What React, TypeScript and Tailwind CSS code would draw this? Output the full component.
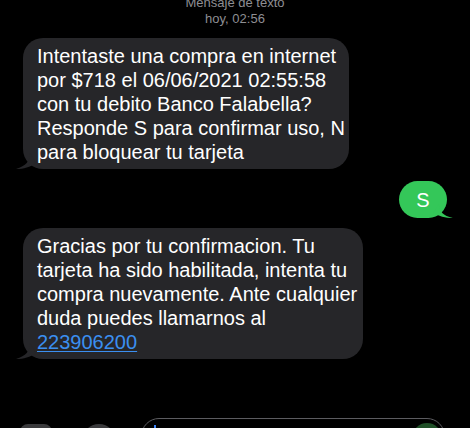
export default function App() {
  return (
    <div
      className="w-[470px] h-[428px] overflow-hidden bg-black flex flex-col"
      style={{ fontFamily: '"Liberation Sans", Arial, sans-serif' }}
    >
      <div className="-mt-[5px] flex flex-col items-center text-[13px] leading-[16px] text-[#8e8e93]">
        <span>Mensaje de texto</span>
        <span>hoy, 02:56</span>
      </div>

      {/* incoming 1 */}
      <div className="mt-[11px] pl-[23px]">
        <div className="relative w-[326px] rounded-[20px] bg-[#262629] pl-[14px] pt-[6px] pb-[5px] text-[20px] leading-[24px] text-white whitespace-nowrap">
          Intentaste una compra en internet
          <br />
          por $718 el 06/06/2021 02:55:58
          <br />
          con tu debito Banco Falabella?
          <br />
          Responde S para confirmar uso, N
          <br />
          para bloquear tu tarjeta
          <svg className="absolute -left-[7px] bottom-0" width="22" height="16" viewBox="0 0 22 16">
            <path d="M14 0 C14 8 10 13 0 16 C8 16 14 14 20 10 Z" fill="#262629" />
          </svg>
        </div>
      </div>

      {/* outgoing */}
      <div className="mt-[12px] flex justify-end pr-[23px]">
        <div className="relative flex h-[37px] w-[48px] items-center justify-center rounded-[19px] bg-[#34c759] text-[20px] text-white">
          S
          <svg className="absolute -right-[6px] bottom-0" width="20" height="14" viewBox="0 0 20 14">
            <path d="M6 0 C6 7 10 12 20 14 C12 14 6 12 0 9 Z" fill="#34c759" />
          </svg>
        </div>
      </div>

      {/* incoming 2 */}
      <div className="mt-[10px] pl-[23px]">
        <div className="relative w-[340px] rounded-[20px] bg-[#262629] pl-[14px] pt-[6px] pb-[5px] text-[20px] leading-[24px] text-white whitespace-nowrap">
          Gracias por tu confirmacion. Tu
          <br />
          tarjeta ha sido habilitada, intenta tu
          <br />
          compra nuevamente. Ante cualquier
          <br />
          duda puedes llamarnos al
          <br />
          <span className="text-[#3b8ff0] underline decoration-1 underline-offset-2">223906200</span>
          <svg className="absolute -left-[7px] bottom-0" width="22" height="16" viewBox="0 0 22 16">
            <path d="M14 0 C14 8 10 13 0 16 C8 16 14 14 20 10 Z" fill="#262629" />
          </svg>
        </div>
      </div>

      {/* input bar */}
      <div className="mt-auto -mb-[30px] flex items-start pl-[20px] pr-[25px]">
        <div className="mt-[6px] h-[30px] w-[32px] rounded-[8px] bg-[#3a3a3c]" />
        <div className="ml-[30px] mt-[6px] h-[34px] w-[34px] rounded-full bg-[#3a3a3c]" />
        <div className="ml-[25px] flex h-[40px] flex-1 items-start rounded-[18px] border border-[#5c5c60] pl-[12px] pr-[2px] pt-[4px]">
          <div className="mt-[2px] h-[14px] w-[2px] bg-[#3b82f6]" />
          <div className="ml-auto h-[30px] w-[30px] rounded-full bg-[#1f4f27]" />
        </div>
      </div>
    </div>
  );
}
